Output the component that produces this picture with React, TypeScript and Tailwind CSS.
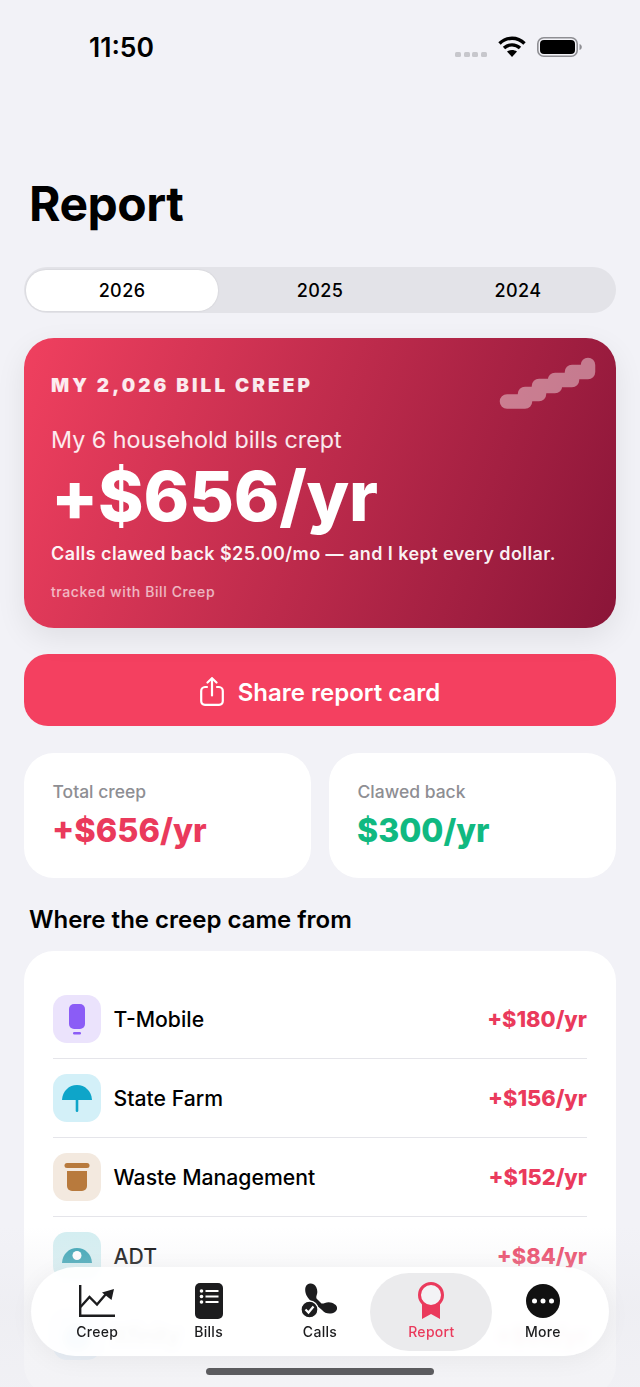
const rows = [
  { name: 'T-Mobile', amount: '+$180/yr', bg: 'bg-[#ebe3fc]', icon: 'phone' },
  { name: 'State Farm', amount: '+$156/yr', bg: 'bg-[#d3f0f8]', icon: 'umbrella' },
  { name: 'Waste Management', amount: '+$152/yr', bg: 'bg-[#f3e9df]', icon: 'bin' },
  { name: 'ADT', amount: '+$84/yr', bg: 'bg-[#d3eef1]', icon: 'eye' },
  { name: 'Xfinity', amount: '+$60/yr', bg: 'bg-[#d8ecfb]', icon: 'wifi' },
];

function RowIcon({ kind }: { kind: string }) {
  if (kind === 'phone') {
    return (
      <svg width="32" height="32" viewBox="0 0 32 32">
        <rect x="8" y="1" width="16" height="25" rx="5" fill="#8b5cf6" />
        <rect x="12" y="29" width="8" height="2.500" rx="1.200" fill="#8b5cf6" />
      </svg>
    );
  }
  if (kind === 'umbrella') {
    return (
      <svg width="32" height="32" viewBox="0 0 32 32">
        <path d="M1 18 C1.500 9 8 3 16 3 C24 3 30.500 9 31 18 Z" fill="#0ea5c9" />
        <rect x="14.700" y="16" width="2.600" height="14" rx="1.300" fill="#0ea5c9" />
      </svg>
    );
  }
  if (kind === 'bin') {
    return (
      <svg width="32" height="32" viewBox="0 0 32 32">
        <rect x="3.500" y="2" width="25" height="5" rx="2.500" fill="#b87a3d" />
        <path d="M6 10 H26 V25 A5 5 0 0 1 21 30 H11 A5 5 0 0 1 6 25 Z" fill="#b87a3d" />
      </svg>
    );
  }
  if (kind === 'eye') {
    return (
      <svg width="32" height="32" viewBox="0 0 32 32">
        <path d="M1 23 C1.500 14 8 8 16 8 C24 8 30.500 14 31 23 Z" fill="#2f9fb0" />
        <circle cx="16" cy="15.500" r="4.500" fill="#ffffff" />
      </svg>
    );
  }
  return (
    <svg width="32" height="32" viewBox="0 0 32 32">
      <circle cx="16" cy="18" r="13" fill="#1d8fe0" />
    </svg>
  );
}

function Tab({ label, active, children }: { label: string; active?: boolean; children: React.ReactNode }) {
  return (
    <div className={`flex h-[78px] flex-col items-center rounded-[39px] pt-[9px] ${active ? '-mx-[5.250px] w-[122px] bg-[#ebebed]' : 'w-[111.500px]'}`}>
      <div className="flex h-[38px] items-center justify-center">{children}</div>
      <span className={`mt-[3.500px] text-[14px] leading-[17px] font-medium tracking-[0.3px] ${active ? 'text-[#ea3a5c]' : 'text-[#1c1c1e]'}`}>{label}</span>
    </div>
  );
}

export default function App() {
  return (
    <div className="relative h-[1387px] w-[640px] overflow-hidden bg-[#f2f2f7] font-['Inter',sans-serif] text-black">
      {/* status bar */}
      <div className="flex h-[94px] items-start justify-between pl-[89px] pr-[58px] pt-[31px]">
        <span className="text-[26.500px] leading-[32px] font-semibold">11:50</span>
        <div className="flex items-center gap-[11px] pt-[5px]">
          <div className="flex gap-[2.700px] pt-[15px]">
            <i className="h-[5px] w-[6px] rounded-[1.500px] bg-[#c7c7cc]" />
            <i className="h-[5px] w-[6px] rounded-[1.500px] bg-[#c7c7cc]" />
            <i className="h-[5px] w-[6px] rounded-[1.500px] bg-[#c7c7cc]" />
            <i className="h-[5px] w-[6px] rounded-[1.500px] bg-[#c7c7cc]" />
          </div>
          <svg width="28" height="21" viewBox="0 0 28 21" fill="none" stroke="#000" strokeWidth="3.400">
            <path d="M1.500 7.500 C8.500 0.500 19.500 0.500 26.500 7.500" />
            <path d="M6 12 C10.500 7.800 17.500 7.800 22 12" />
            <path d="M14 21 L9 15.500 C12 13.500 16 13.500 19 15.500 Z" fill="#000" stroke="none" />
          </svg>
          <svg width="45" height="20" viewBox="0 0 45 20">
            <rect x="0.800" y="0.800" width="39.400" height="18.400" rx="6" fill="none" stroke="#8e8e93" strokeWidth="1.600" />
            <rect x="3" y="3" width="35" height="14" rx="4" fill="#000" />
            <path d="M42.500 7 C44 7.500 44.800 8.500 44.800 10 C44.800 11.500 44 12.500 42.500 13 Z" fill="#8e8e93" />
          </svg>
        </div>
      </div>

      <div className="px-[24px]">
        <h1 className="ml-[5px] mt-[82px] h-[56px] text-[48px] leading-[56px] font-bold tracking-[-0.5px]">Report</h1>

        {/* year switch */}
        <div className="mt-[35px] flex h-[46px] items-center rounded-[23px] bg-[#e3e3e8] px-[2px] text-[18px] font-medium tracking-[0.4px]">
          <div className="flex h-[41px] w-[192px] items-center justify-center rounded-[20px] bg-white shadow-[0_0_2px_rgba(0,0,0,0.12)]">2026</div>
          <div className="flex h-[41px] w-[204px] items-center justify-center">2025</div>
          <div className="flex h-[41px] flex-1 items-center justify-center">2024</div>
        </div>

        {/* share card */}
        <div className="relative mt-[25px] h-[290px] rounded-[30px] bg-[linear-gradient(110deg,#f0405f,#8a1538)] pl-[27px] pt-[37px] text-white shadow-[0_10px_30px_rgba(0,0,0,0.08)]">
          <svg className="absolute right-[18px] top-[19px]" width="100" height="54" viewBox="0 0 100 54" fill="none">
            <path d="M9 44.500 H27 V37 H41 V29 H57 V23 H74 V15 H90 V8" stroke="#ffffff" strokeOpacity="0.42" strokeWidth="14.500" strokeLinecap="round" strokeLinejoin="round" />
          </svg>
          <div className="text-[19px] leading-[22px] font-black tracking-[3.050px] text-white/90">MY 2,026 BILL CREEP</div>
          <div className="mt-[29px] text-[23.300px] leading-[28px] text-white/90">My 6 household bills crept</div>
          <div className="mt-[1px] text-[69px] leading-[82px] font-extrabold tracking-[-0.2px]">+$656/yr</div>
          <div className="mt-[6px] text-[18px] leading-[22px] font-semibold tracking-[0.43px] text-white/95">Calls clawed back $25.00/mo — and I kept every dollar.</div>
          <div className="mt-[18px] text-[14px] leading-[17px] font-medium tracking-[0.6px] text-white/65">tracked with Bill Creep</div>
        </div>

        {/* share button */}
        <div className="mt-[26px] flex h-[72px] items-center justify-center gap-[14px] rounded-[24px] bg-[#f44060] pt-[3px] text-white">
          <svg width="24" height="29" viewBox="0 0 24 29" fill="none" stroke="#fff" strokeWidth="2.200" strokeLinecap="round" strokeLinejoin="round">
            <path d="M7 10 H5 A4 4 0 0 0 1.200 14 V24 A4 4 0 0 0 5 27.900 H19 A4 4 0 0 0 22.800 24 V14 A4 4 0 0 0 19 10 H17" />
            <path d="M12 18.500 V1.500" />
            <path d="M7.500 5.500 L12 1.200 L16.500 5.500" />
          </svg>
          <span className="pt-[3px] text-[24px] leading-[30px] font-semibold">Share report card</span>
        </div>

        {/* totals */}
        <div className="mt-[27px] grid grid-cols-2 gap-[18px]">
          <div className="h-[125px] rounded-[30px] bg-white pl-[28.500px] pt-[28px]">
            <div className="text-[17.500px] leading-[22px] font-medium text-[#8e8e93]">Total creep</div>
            <div className="-ml-[0.500px] mt-[8px] text-[32.500px] leading-[40px] font-extrabold text-[#ea3a5c]">+$656/yr</div>
          </div>
          <div className="h-[125px] rounded-[30px] bg-white pl-[28.500px] pt-[28px]">
            <div className="text-[17.500px] leading-[22px] font-medium text-[#8e8e93]">Clawed back</div>
            <div className="-ml-[0.500px] mt-[8px] text-[32px] leading-[40px] font-extrabold text-[#10b981]">$300/yr</div>
          </div>
        </div>

        <h2 className="ml-[5px] mt-[27px] text-[24px] leading-[30px] font-semibold">Where the creep came from</h2>

        {/* bill rows */}
        <div className="mt-[16px] rounded-[30px] bg-white px-[29px] pb-[20px] pt-[29px]">
          {rows.map((row, i) => (
            <div key={row.name} className={`flex h-[79px] items-center ${i < rows.length - 1 ? 'border-b border-[#e5e5ea]' : ''}`}>
              <div className={`flex h-[48px] w-[48px] items-center justify-center rounded-[14px] ${row.bg}`}>
                <RowIcon kind={row.icon} />
              </div>
              <span className="ml-[12.500px] flex-1 pt-[1px] text-[21.200px] font-medium">{row.name}</span>
              <span className="pt-[1px] text-[21.800px] font-extrabold text-[#ea3a5c]">{row.amount}</span>
            </div>
          ))}
        </div>
      </div>

      {/* bottom fade */}
      <div className="absolute inset-x-0 bottom-0 h-[160px] bg-gradient-to-b from-[#f2f2f7]/0 via-[#ececf0]/60 to-[#f0f0f4]/80" />

      {/* tab bar */}
      <div className="absolute left-[31px] top-[1267px] flex h-[89px] w-[578px] items-center rounded-[44.500px] bg-white/93 px-[10.500px] shadow-[0_4px_24px_rgba(0,0,0,0.05)] backdrop-blur-[3px]">
        <Tab label="Creep">
          <svg width="36" height="32" viewBox="0 0 36 32" fill="none" stroke="#1c1c1e" strokeWidth="2.400">
            <path d="M1.200 0 V30.800 H36" />
            <path d="M1.500 22 L10.500 12 L18 19.500 L27 9" />
            <path d="M35 4 L32.500 15 L23 7.500 Z" fill="#1c1c1e" stroke="none" />
          </svg>
        </Tab>
        <Tab label="Bills">
          <svg width="28" height="36" viewBox="0 0 28 36">
            <rect x="0" y="0" width="28" height="36" rx="5" fill="#1c1c1e" />
            <circle cx="6.500" cy="8" r="1.800" fill="#fff" />
            <circle cx="6.500" cy="13.500" r="1.800" fill="#fff" />
            <circle cx="6.500" cy="19" r="1.800" fill="#fff" />
            <rect x="10.500" y="7" width="13" height="2" fill="#fff" />
            <rect x="10.500" y="12.500" width="13" height="2" fill="#fff" />
            <rect x="10.500" y="18" width="13" height="2" fill="#fff" />
          </svg>
        </Tab>
        <Tab label="Calls">
          <svg width="36" height="35" viewBox="0 0 36 35" className="-ml-[3px]">
            <path d="M9 0.500 C5 1 3.500 5 4.500 9.500 C5.500 14 9 18 14 21 L21 27 C24 31 30 31.500 34 29 C37 27 36.500 23 34 21.500 C31 19 27 18.500 24 20 C22.500 20.500 21.500 20.800 20.500 20.500 L15.500 15.500 C15 14 15.500 13 16 11 C17 7.500 15.500 3 13 1.500 C11.500 0.500 10 0.300 9 0.500 Z" fill="#1c1c1e" />
            <circle cx="8.500" cy="26.500" r="8.500" fill="#1c1c1e" stroke="#fff" strokeWidth="1.300" />
            <path d="M4.500 26.500 L7.500 29.500 L12.500 23.500" fill="none" stroke="#fff" strokeWidth="2.200" />
          </svg>
        </Tab>
        <Tab label="Report" active>
          <svg width="26" height="37" viewBox="0 0 26 37">
            <path d="M4 20 V37 L13 32 L22 37 V20 Z" fill="#ea3a5c" />
            <circle cx="13" cy="13" r="11.500" fill="#f3f3f5" stroke="#ea3a5c" strokeWidth="3" />
          </svg>
        </Tab>
        <Tab label="More">
          <svg width="34" height="34" viewBox="0 0 34 34">
            <circle cx="17" cy="17" r="17" fill="#111" />
            <circle cx="8.500" cy="17" r="2.500" fill="#fff" />
            <circle cx="17" cy="17" r="2.500" fill="#fff" />
            <circle cx="25.500" cy="17" r="2.500" fill="#fff" />
          </svg>
        </Tab>
      </div>

      {/* home indicator */}
      <div className="absolute left-[206px] top-[1368px] h-[7px] w-[228px] rounded-full bg-[#5c5c5f]" />
    </div>
  );
}
